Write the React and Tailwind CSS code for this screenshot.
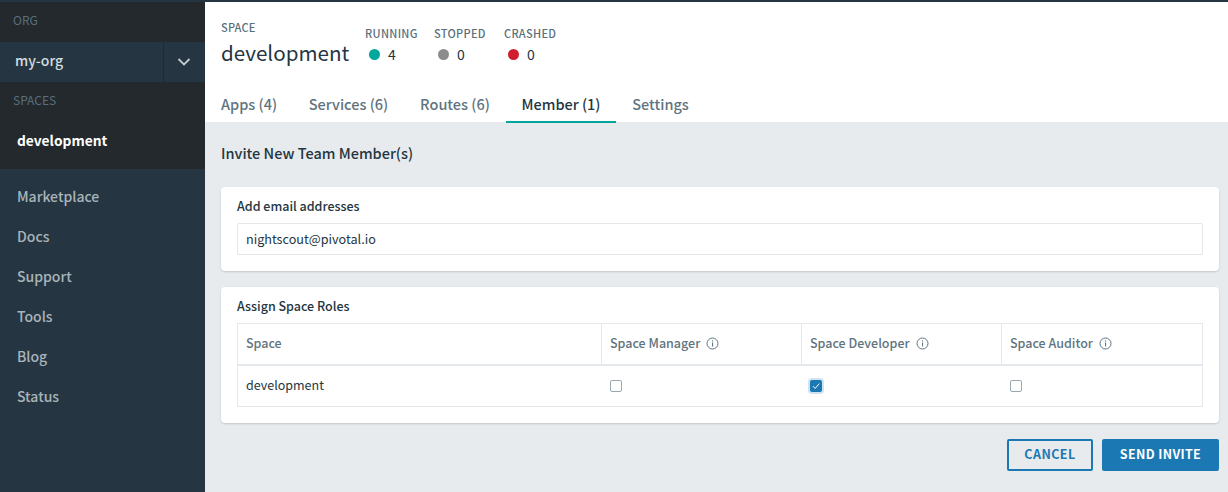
import React from "react";

function Info() {
  return (
    <svg width="13" height="13" viewBox="0 0 13 13" fill="none" className="shrink-0">
      <circle cx="6.5" cy="6.5" r="5.5" stroke="#5f7480" strokeWidth="1" />
      <rect x="6" y="5.6" width="1.1" height="3.8" fill="#5f7480" />
      <rect x="6" y="3.4" width="1.1" height="1.2" fill="#5f7480" />
    </svg>
  );
}

function Box({ checked }) {
  if (checked) {
    return (
      <span className="flex h-[12px] w-[12px] items-center justify-center rounded-[2px] bg-[#1b78b3] shadow-[0_0_0_2px_#cfe3f0]">
        <svg width="10" height="10" viewBox="0 0 10 10" fill="none">
          <path d="M2 5.2 L4.2 7.4 L8.2 2.6" stroke="#ffffff" strokeWidth="1" />
        </svg>
      </span>
    );
  }
  return <span className="block h-[12px] w-[12px] rounded-[2px] border border-[#9aa8b0] bg-white" />;
}

function Stat({ label, color, value, w }) {
  return (
    <div className={w}>
      <div className="text-[11px] leading-[14px] font-medium tracking-[0.3px] text-[#5a6f7b]">{label}</div>
      <div className="mt-[5px] flex items-center pl-[4px] text-[14px] leading-[18px] text-[#243641]">
        <span className="h-[11px] w-[11px] rounded-full" style={{ backgroundColor: color }} />
        <span className="ml-[8px]">{value}</span>
      </div>
    </div>
  );
}

function Tab({ children, active, cls }) {
  return (
    <div
      className={`flex h-[40px] items-start justify-center whitespace-nowrap border-b-[2px] pt-[11px] text-[14.5px] leading-[20px] font-medium ${cls} ${
        active ? "border-[#00a79d] text-[#243641]" : "border-transparent text-[#5f7480]"
      }`}
    >
      {children}
    </div>
  );
}

const sideLinks = ["Marketplace", "Docs", "Support", "Tools", "Blog", "Status"];

function HeadCell({ children, cls }) {
  return (
    <div className={`flex h-[40px] items-center gap-[6px] border-r border-[#e4e8ec] pb-[1px] pl-[8px] text-[12.5px] font-medium text-[#5f7480] last:border-r-0 ${cls}`}>
      {children}
    </div>
  );
}

function BodyCell({ children, cls }) {
  return (
    <div className={`flex h-[40px] items-center pl-[8px] text-[12.5px] text-[#243641] ${cls}`}>{children}</div>
  );
}

export default function App() {
  return (
    <div className="flex h-[492px] w-[1228px] overflow-hidden bg-[#e8ebee] font-['Noto_Sans_CJK_SC','Noto_Sans',sans-serif]">
      <aside className="flex w-[205px] shrink-0 flex-col bg-[#253642]">
        <div className="h-[2px] bg-[#253642]" />
        <div className="flex h-[167px] flex-col bg-[#23292d]">
          <div className="flex h-[40px] items-center pb-[4px] pl-[13px] text-[12px] text-[#5a6f7b]">ORG</div>
          <div className="flex h-[40px] items-center bg-[#253642]">
            <div className="flex-1 pb-[3px] pl-[15px] text-[14px] font-medium text-[#d5dcdf]">my-org</div>
            <div className="flex h-full w-[42px] items-center justify-center border-l border-[#23292d] pb-[1px] pr-[2px]">
              <svg width="14" height="10" viewBox="0 0 14 10" fill="none">
                <path d="M1.5 2 L7 7.5 L12.5 2" stroke="#c3ccd1" strokeWidth="1.8" />
              </svg>
            </div>
          </div>
          <div className="flex h-[38px] items-center pb-[2px] pl-[13px] text-[12px] text-[#5a6f7b]">SPACES</div>
          <div className="flex h-[49px] items-center pb-[8px] pl-[17px] text-[13.75px] font-bold text-white">development</div>
        </div>
        <nav className="flex flex-col pt-[8px]">
          {sideLinks.map((l) => (
            <div key={l} className="flex h-[40px] items-center pb-[2px] pl-[17px] text-[14px] font-medium text-[#a9b4ba]">
              {l}
            </div>
          ))}
        </nav>
      </aside>

      <main className="flex min-w-0 flex-1 flex-col">
        <div className="h-[2px] bg-[#253642]" />
        <header className="flex h-[120px] flex-col bg-white">
          <div className="flex h-[80px] shrink-0 items-start pl-[16px]">
            <div className="w-[144px] pt-[18px]">
              <div className="text-[11px] leading-[14px] font-medium tracking-[0.2px] text-[#5a6f7b]">SPACE</div>
              <div className="mt-[3px] text-[20.6px] leading-[30px] text-[#243641]">development</div>
            </div>
            <div className="flex pt-[24px]">
              <Stat label="RUNNING" color="#00a79d" w="w-[69px]" value="4" />
              <Stat label="STOPPED" color="#8c8c8c" w="w-[70px]" value="0" />
              <Stat label="CRASHED" color="#cf1f2e" w="w-[70px]" value="0" />
            </div>
          </div>
          <div className="flex pl-[16px] pt-[1px]">
            <Tab cls="w-[72px] justify-start">Apps (4)</Tab>
            <Tab cls="w-[111px]">Services (6)</Tab>
            <Tab cls="w-[102px]">Routes (6)</Tab>
            <Tab active cls="w-[110px]">Member (1)</Tab>
            <Tab cls="w-[89px]">Settings</Tab>
          </div>
        </header>

        <div className="flex flex-1 flex-col pl-[16px] pr-[9px]">
          <h2 className="mt-[21px] text-[14.5px] leading-[20px] font-medium text-[#243641]">Invite New Team Member(s)</h2>

          <section className="mt-[24px] h-[84px] rounded-[4px] bg-white px-[16px] pt-[11px] shadow-[0_1px_2px_rgba(0,0,0,0.15)]">
            <div className="text-[12.5px] leading-[16px] font-medium text-[#243641]">Add email addresses</div>
            <div className="mt-[9px] flex h-[32px] items-center rounded-[2px] border border-[#e4e8ec] pb-[2px] pl-[8px] text-[12.65px] text-[#243641]">
              nightscout@pivotal.io
            </div>
          </section>

          <section className="mt-[16px] h-[136px] rounded-[4px] bg-white px-[16px] pt-[11px] shadow-[0_1px_2px_rgba(0,0,0,0.15)]">
            <div className="text-[12.5px] leading-[16px] font-medium text-[#243641]">Assign Space Roles</div>
            <div className="mt-[9px] border border-[#e4e8ec]">
              <div className="flex border-b-2 border-[#e4e8ec]">
                <HeadCell cls="w-[364px]">Space</HeadCell>
                <HeadCell cls="w-[200px]">Space Manager <Info /></HeadCell>
                <HeadCell cls="w-[200px]">Space Developer <Info /></HeadCell>
                <HeadCell cls="flex-1">Space Auditor <Info /></HeadCell>
              </div>
              <div className="flex">
                <BodyCell cls="w-[364px] pb-[2px]">development</BodyCell>
                <BodyCell cls="w-[200px]"><Box /></BodyCell>
                <BodyCell cls="w-[200px]"><Box checked /></BodyCell>
                <BodyCell cls="flex-1"><Box /></BodyCell>
              </div>
            </div>
          </section>

          <div className="mt-[16px] flex justify-end gap-[9px]">
            <button className="flex h-[32px] w-[86px] items-center justify-center rounded-[2px] border-2 border-[#1b78b3] pb-[2px] text-[12.5px] font-bold tracking-[0.45px] text-[#1b78b3]">CANCEL</button>
            <button className="flex h-[32px] w-[117px] items-center justify-center rounded-[2px] bg-[#1b78b3] pb-[2px] text-[12.5px] font-bold tracking-[0.35px] text-white">SEND INVITE</button>
          </div>
        </div>
      </main>
    </div>
  );
}
